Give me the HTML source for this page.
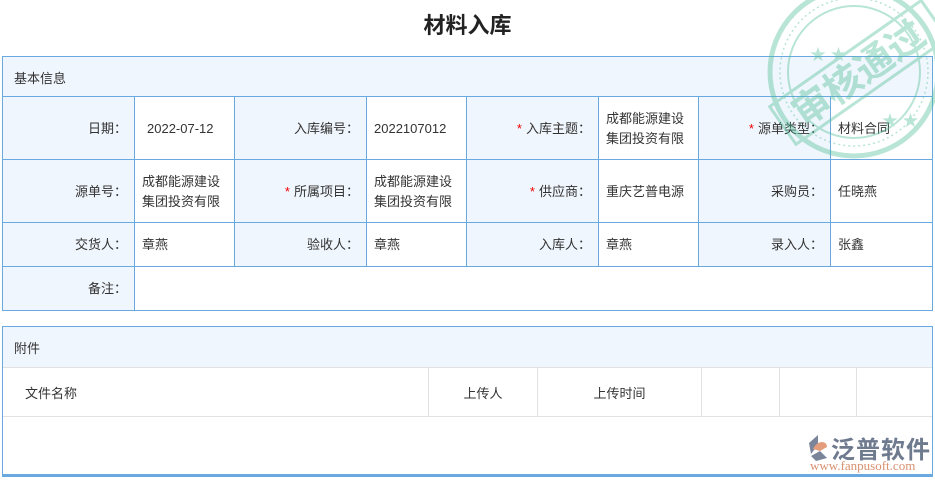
<!DOCTYPE html>
<html><head><meta charset="utf-8"><style>
body{margin:0;width:935px;height:480px;background:#fff;font-family:"Liberation Sans","Noto Sans CJK SC",sans-serif;font-size:13px;color:#333;position:relative;overflow:hidden}
.t{position:absolute;top:8px;left:0;width:935px;text-align:center;font-size:22px;font-weight:bold;color:#222}
.box{position:absolute;border:1px solid #6aa9e0;box-sizing:border-box}
.hd{background:#f0f6fd;position:absolute;left:0;right:0;padding-left:11px;box-sizing:border-box;display:flex;align-items:center}
.c{position:absolute;box-sizing:border-box;border-left:1px solid #6aa9e0;border-top:1px solid #6aa9e0;display:flex;align-items:center;line-height:20px}
.l{background:#f0f6fd;justify-content:flex-end;padding-right:8px}
.v{padding-left:7px}
.r{color:#e00;margin-right:4px}
.g{position:absolute;box-sizing:border-box;border-left:1px solid #e2e2e2;border-top:1px solid #e2e2e2;display:flex;align-items:center;justify-content:center;height:49px}
</style></head><body>
<div class="t">材料入库</div>
<div class="box" style="left:2px;top:56px;width:931px;height:255px">
<div class="hd" style="top:0;height:40px">基本信息</div>
<div class="c l" style="left:0;top:39px;width:132px;height:64px;border-left:none">日期：</div>
<div class="c v" style="left:131px;top:39px;width:100px;height:64px;padding-left:12px">2022-07-12</div>
<div class="c l" style="left:231px;top:39px;width:133px;height:64px">入库编号：</div>
<div class="c v" style="left:363px;top:39px;width:100px;height:64px">2022107012</div>
<div class="c l" style="left:463px;top:39px;width:133px;height:64px"><span class="r">*</span>入库主题：</div>
<div class="c v" style="left:595px;top:39px;width:100px;height:64px">成都能源建设<br>集团投资有限</div>
<div class="c l" style="left:695px;top:39px;width:133px;height:64px"><span class="r">*</span>源单类型：</div>
<div class="c v" style="left:827px;top:39px;width:102px;height:64px">材料合同</div>
<div class="c l" style="left:0;top:102px;width:132px;height:64px;border-left:none">源单号：</div>
<div class="c v" style="left:131px;top:102px;width:100px;height:64px">成都能源建设<br>集团投资有限</div>
<div class="c l" style="left:231px;top:102px;width:133px;height:64px"><span class="r">*</span>所属项目：</div>
<div class="c v" style="left:363px;top:102px;width:100px;height:64px">成都能源建设<br>集团投资有限</div>
<div class="c l" style="left:463px;top:102px;width:133px;height:64px"><span class="r">*</span>供应商：</div>
<div class="c v" style="left:595px;top:102px;width:100px;height:64px">重庆艺普电源</div>
<div class="c l" style="left:695px;top:102px;width:133px;height:64px">采购员：</div>
<div class="c v" style="left:827px;top:102px;width:102px;height:64px">任晓燕</div>
<div class="c l" style="left:0;top:165px;width:132px;height:45px;border-left:none">交货人：</div>
<div class="c v" style="left:131px;top:165px;width:100px;height:45px">章燕</div>
<div class="c l" style="left:231px;top:165px;width:133px;height:45px">验收人：</div>
<div class="c v" style="left:363px;top:165px;width:100px;height:45px">章燕</div>
<div class="c l" style="left:463px;top:165px;width:133px;height:45px">入库人：</div>
<div class="c v" style="left:595px;top:165px;width:100px;height:45px">章燕</div>
<div class="c l" style="left:695px;top:165px;width:133px;height:45px">录入人：</div>
<div class="c v" style="left:827px;top:165px;width:102px;height:45px">张鑫</div>
<div class="c l" style="left:0;top:209px;width:132px;height:44px;border-left:none">备注：</div>
<div class="c v" style="left:131px;top:209px;width:798px;height:44px"></div>
</div>
<div class="box" style="left:2px;top:326px;width:931px;height:151px;border-bottom:3px solid #6aa9e0">
<div class="hd" style="top:0;height:41px">附件</div>
<div class="g" style="left:0;top:40px;width:425px;border-left:none;justify-content:flex-start;padding-left:22px">文件名称</div>
<div class="g" style="left:425px;top:40px;width:109px">上传人</div>
<div class="g" style="left:534px;top:40px;width:164px">上传时间</div>
<div class="g" style="left:698px;top:40px;width:78px"></div>
<div class="g" style="left:776px;top:40px;width:77px"></div>
<div class="g" style="left:853px;top:40px;width:76px"></div>
<div style="position:absolute;left:0;right:0;top:89px;border-top:1px solid #e2e2e2"></div>
</div>
<div style="position:absolute;left:807px;top:434px;width:22px;height:28px">
<svg width="22" height="28"><path d="M2 9 L11 1 L11 11 L4 20 Z" fill="#7a8599"/><path d="M6 15 C10 6 20 6 20 13 L13 17 Z" fill="#e39c7c"/><path d="M4 22 L13 17 L20 24 L9 27 Z" fill="#7a8599"/></svg></div>
<div style="position:absolute;left:831px;top:430px;font-size:24px;color:#6e7a8e;font-weight:bold;letter-spacing:1px">泛普软件</div>
<div style="position:absolute;left:810px;top:458px;font-size:13px;color:#d89070;font-family:'Liberation Serif',serif">www.fanpusoft.com</div>
<svg style="position:absolute;left:760px;top:-20px" width="190" height="190" viewBox="0 0 190 190">
<g opacity="0.4" stroke="#4fbf97" fill="none">
<circle cx="94" cy="92" r="84" stroke-width="5"/>
<circle cx="94" cy="92" r="74" stroke-width="1.5" stroke-dasharray="2 3"/>
<circle cx="94" cy="92" r="66" stroke-width="2"/>
<g transform="rotate(-35 94 92)">
<rect x="5" y="72" width="185" height="46" stroke-width="3"/>
<text x="97" y="109" text-anchor="middle" font-size="38" font-weight="bold" fill="#4fbf97" stroke="none" font-family="'Noto Sans CJK SC',sans-serif">审核通过</text>
</g>
<text x="50" y="80" font-size="16" fill="#4fbf97" stroke="none">★ ★</text>
<text x="122" y="146" font-size="16" fill="#4fbf97" stroke="none">★ ★</text>
</g></svg>
</body></html>
